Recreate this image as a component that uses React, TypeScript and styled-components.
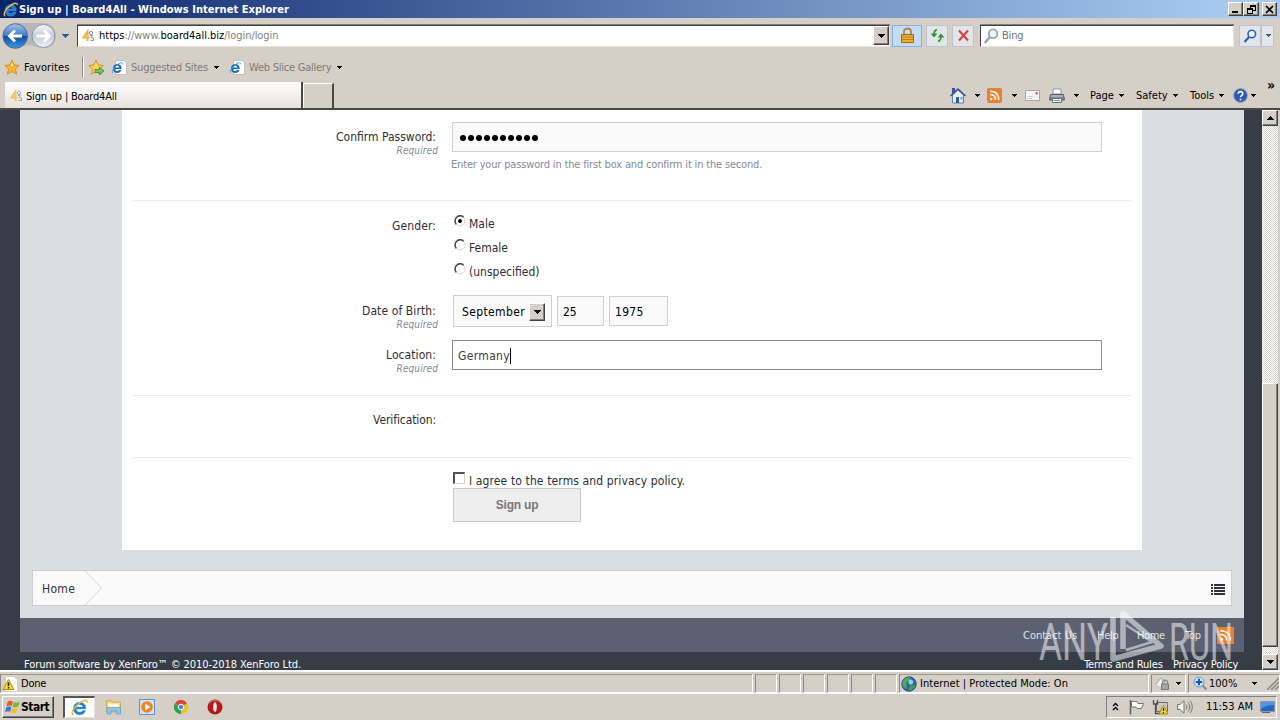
import React from 'react';
import styled, { createGlobalStyle } from 'styled-components';

type TextProps = {
    $width?: number;
    $spacing?: number;
    $color?: string;
};

const GlobalStyle = createGlobalStyle`
    * {
        box-sizing: border-box;
    }

    body {
        margin: 0;
        overflow: hidden;
        background: #d5cfc7;
        font-family: "DejaVu Sans Condensed", "DejaVu Sans", sans-serif;
        font-size: 11px;
        color: #000;
    }

    svg {
        display: block;
        flex: none;
    }
`;

const Window = styled.div`
    display: flex;
    flex-direction: column;
    width: 1280px;
    height: 720px;
    overflow: hidden;
`;

const Text = styled.span<TextProps>`
    flex: none;
    width: ${props => (props.$width ? `${props.$width}px` : 'auto')};
    letter-spacing: ${props => props.$spacing ?? 0}px;
    color: ${props => props.$color ?? 'inherit'};
    white-space: pre;
`;

const Gap = styled.span<{ $size: number }>`
    flex: none;
    width: ${props => props.$size}px;
`;

/* title bar */

const TitleBar = styled.header`
    display: flex;
    align-items: center;
    height: 18px;
    padding: 0 3px 0 3px;
    background: linear-gradient(90deg, #0a246a, #a6caf0 96%);
    color: #fff;
    font-weight: bold;
`;

const TitleText = styled.span`
    flex: 1;
    margin-left: 1px;
    letter-spacing: 0.05px;
    white-space: nowrap;
`;

const RaisedButton = styled.span<{ $width: number; $height: number }>`
    display: flex;
    flex: none;
    align-items: center;
    justify-content: center;
    width: ${props => props.$width}px;
    height: ${props => props.$height}px;
    background: #d5cfc7;
    border: 1px solid;
    border-color: #fff #404040 #404040 #fff;
    box-shadow: inset -1px -1px 0 #808080;
`;

/* navigation row */

const NavBar = styled.div`
    display: flex;
    align-items: center;
    height: 33px;
    padding: 2px 0 0 2px;
`;

const InsetBox = styled.div<{ $width: number }>`
    display: flex;
    flex: none;
    align-items: center;
    width: ${props => props.$width}px;
    height: 22px;
    background: #fff;
    border: 1px solid;
    border-color: #404040 #e8e4dc #e8e4dc #404040;
    box-shadow: 0 -1px 0 #808080;
`;

const NavButton = styled.span<{ $width: number; $active?: boolean }>`
    display: flex;
    flex: none;
    align-items: center;
    justify-content: center;
    width: ${props => props.$width}px;
    height: 22px;
    background: ${props => (props.$active ? '#c5dcf9' : '#e4e5e8')};
    border: 1px solid ${props => (props.$active ? '#8caede' : '#bcc4d2')};
`;

const Grow = styled.span`
    flex: 1;
`;

const FavoritesBar = styled.div`
    display: flex;
    align-items: center;
    height: 31px;
    padding: 1px 0 0 4px;
`;

const ToolSeparator = styled.span`
    width: 2px;
    height: 20px;
    margin: 0 4px 0 12px;
    background: linear-gradient(90deg, #8f8b83 50%, #fff 50%);
`;

/* tabs and command bar */

const TabRow = styled.div`
    display: flex;
    align-items: flex-end;
    height: 28px;
    padding-left: 5px;
    border-bottom: 2px solid #4a4845;
`;

const Tab = styled.div`
    display: flex;
    align-items: center;
    width: 298px;
    height: 26px;
    padding: 2px 0 0 5px;
    background: linear-gradient(#fff, #e6e2da);
    border-right: 2px solid #4a4845;
`;

const NewTab = styled.div`
    width: 31px;
    height: 25px;
    background: #d5cfc7;
    border: 1px solid #fff;
    border-right: 2px solid #4a4845;
    border-bottom: 0;
`;

const CommandBar = styled.div`
    display: flex;
    flex: 1;
    align-items: center;
    justify-content: flex-end;
    height: 26px;
    padding-top: 1px;
`;

const Overflow = styled.span`
    align-self: flex-start;
    width: 13px;
    margin: -6px 0 0 7px;
    font-size: 14px;
    font-weight: bold;
`;

/* web page */

const Viewport = styled.main`
    display: flex;
    height: 560px;
    background: #363d47;
    padding-left: 20px;
`;

const Page = styled.div`
    position: relative;
    display: flex;
    flex-direction: column;
    width: 1224px;
    margin-right: 18px;
    background: #dadee1;
`;

const Panel = styled.section`
    width: 1020px;
    height: 440px;
    margin-left: 102px;
    padding: 0 10px;
    background: #fff;
    font-size: 12px;
    color: #2e2f33;
`;

const FormSection = styled.div<{ $height: number; $top: number; $last?: boolean }>`
    height: ${props => props.$height}px;
    padding-top: ${props => props.$top}px;
    border-bottom: ${props => (props.$last ? '0' : '1px solid #ebebeb')};
`;

const FormRow = styled.div<{ $height?: number }>`
    display: flex;
    height: ${props => (props.$height ? `${props.$height}px` : 'auto')};
`;

const LabelCell = styled.div`
    display: flex;
    flex: none;
    flex-direction: column;
    align-items: flex-end;
    width: 320px;
    padding: 6px 16px 0 0;
    line-height: 18px;
`;

const Required = styled.em`
    margin-right: -2px;
    font-size: 10px;
    line-height: 9px;
    letter-spacing: 0.1px;
    color: #858a9b;
`;

const FieldCell = styled.div`
    display: flex;
    flex-direction: column;
    align-items: flex-start;
`;

const TextBox = styled.div<{ $width: number; $focus?: boolean }>`
    display: flex;
    align-items: center;
    width: ${props => props.$width}px;
    height: 30px;
    padding: 1px 0 0 5px;
    background: ${props => (props.$focus ? '#fff' : '#fafafa')};
    border: 1px solid ${props => (props.$focus ? '#8a8b8e' : '#cfcfcf')};
    color: ${props => (props.$focus ? '#3c3d42' : '#000')};
`;

const PasswordDot = styled.span`
    width: 6px;
    height: 6px;
    margin-right: 2px;
    border-radius: 50%;
    background: #000;
    &:first-child {
        margin-left: 2px;
    }
`;

const Caret = styled.span`
    width: 1px;
    height: 16px;
    background: #000;
`;

const Hint = styled.p`
    margin: 5px 0 0 -1px;
    font-size: 11px;
    line-height: 16px;
    letter-spacing: -0.17px;
    color: #8589a0;
`;

const RadioLine = styled.div`
    display: flex;
    align-items: center;
    height: 24px;
    padding-left: 2px;
    line-height: 16px;
`;

const RadioMark = styled.span`
    display: flex;
    width: 12px;
    height: 12px;
    margin: 0 3px 5px 0;
`;

const RadioText = styled(Text)`
    padding-top: 2px;
`;

const DateFields = styled.div`
    display: flex;
    gap: 5px;
    padding-left: 1px;
`;

const SelectBox = styled.div`
    display: flex;
    align-items: center;
    width: 99px;
    height: 32px;
    margin-top: -1px;
    padding: 1px 6px 0 8px;
    background: #fafafa;
    border: 1px solid #cfcfcf;
    color: #000;
`;

const AgreeLine = styled.div`
    display: flex;
    height: 17px;
    margin-left: 1px;
    line-height: 21px;
`;

const CheckBox = styled.span`
    width: 12px;
    height: 12px;
    margin: 1px 4px 0 0;
    border: 1px solid;
    border-width: 2px 1px 1px 2px;
    border-color: #55534f #d5cfc7 #d5cfc7 #55534f;
`;

const SubmitButton = styled.div`
    display: flex;
    align-items: center;
    justify-content: center;
    width: 128px;
    height: 34px;
    margin-left: 1px;
    background: #eee;
    border: 1px solid #c9c9c9;
    color: #777;
    font: bold 12px "Liberation Sans", Arial, sans-serif;
    letter-spacing: -0.2px;
`;

const Breadcrumb = styled.nav`
    display: flex;
    align-items: center;
    width: 1200px;
    height: 36px;
    margin: 20px 0 12px 12px;
    padding: 0 6px 0 9px;
    background: #fafafa;
    border: 1px solid #ccced1;
    font-size: 12px;
    line-height: 16px;
    color: #2e2f33;
`;

const CrumbText = styled(Text)`
    padding-top: 2px;
`;

const ListButton = styled.span`
    padding-top: 3px;
`;

const FooterLinks = styled.div`
    display: flex;
    align-items: center;
    justify-content: flex-end;
    height: 34px;
    padding-right: 10px;
    background: #5b6171;
    color: #dfe1e6;
`;

const Legal = styled.footer`
    display: flex;
    align-items: flex-start;
    height: 18px;
    padding: 4px 0 0 4px;
    line-height: 17px;
    background: #363d47;
    color: #fff;
`;

const Watermark = styled.svg`
    position: absolute;
    left: 1014px;
    top: 496px;
    width: 206px;
    height: 64px;
`;

const ScrollTrack = styled.div`
    display: flex;
    flex-direction: column;
    width: 16px;
    background: repeating-conic-gradient(#fff 0 25%, #d9d4cb 0 50%) 0 0 / 2px 2px;
`;

const ScrollThumb = styled.div`
    width: 16px;
    height: 264px;
    margin: 257px 0 7px;
    background: #d5cfc7;
    border: 1px solid;
    border-color: #fff #404040 #404040 #fff;
    box-shadow: inset -1px -1px 0 #808080;
`;

const ViewportEdge = styled.span`
    width: 2px;
    background: #d5cfc7;
`;

/* status bar and taskbar */

const StatusBar = styled.div`
    display: flex;
    align-items: center;
    height: 24px;
    padding-top: 2px;
    gap: 2px;
    border-top: 2px solid #fff;
    border-bottom: 1px solid #fff;
`;

const StatusPane = styled.div<{ $width: number }>`
    display: flex;
    flex: none;
    align-items: center;
    width: ${props => props.$width}px;
    height: 19px;
    padding-left: 1px;
    border: 1px solid;
    border-color: #9b968e #fff #fff #8b8780;
`;

const TaskBar = styled.div`
    display: flex;
    align-items: center;
    height: 26px;
    padding: 0 3px 1px 2px;
`;

const StartButton = styled.div`
    display: flex;
    align-items: center;
    width: 52px;
    height: 22px;
    padding-left: 2px;
    border: 1px solid;
    border-color: #fff #404040 #404040 #fff;
    box-shadow: inset -1px -1px 0 #808080;
    font-size: 12px;
    font-weight: bold;
`;

const ActiveTask = styled.div`
    display: flex;
    align-items: center;
    justify-content: center;
    width: 32px;
    height: 22px;
    margin: 0 10px 0 9px;
    background: #fff;
    border: 1px solid;
    border-width: 2px 1px 1px 2px;
    border-color: #555 #e8e4dc #e8e4dc #555;
`;

const Tray = styled.div`
    display: flex;
    align-items: center;
    width: 171px;
    height: 22px;
    padding-left: 5px;
    border: 1px solid;
    border-color: #808080 #fff #fff #808080;
    line-height: 16px;
`;

const Clock = styled(Text)`
    padding-top: 1px;
`;

const Arrow = ({ up = false, size = 7, color = '#000' }: { up?: boolean; size?: number; color?: string }) => (
    <svg width={size} height={size < 7 ? 3 : 4} viewBox="0 0 7 4" preserveAspectRatio="none" shapeRendering="crispEdges">
        <path d={up ? 'M0 4L3.5 0L7 4Z' : 'M0 0H7L3.5 4Z'} fill={color} />
    </svg>
);

const IeIcon = ({ size = 16 }: { size?: number }) => (
    <svg width={size} height={size} viewBox="0 0 16 16">
        <path d="M14 9.4H5C5.2 11.3 6.5 12.3 8.2 12.3C9.5 12.3 10.4 11.8 11 10.9H13.8C13 13.4 11 15 8.2 15C4.6 15 2.2 12.5 2.2 9C2.2 5.5 4.7 3 8.2 3C11.9 3 14.3 5.6 14 9.4ZM5.1 7.5H11.2C11 6.1 9.8 5.3 8.2 5.3C6.6 5.3 5.4 6.1 5.1 7.5Z" fill="#1d78cf" stroke="#65b8f1" strokeWidth=".5" />
        <path d="M2.4 15C-.8 13.6 2.9 7.2 8.5 3.4C12 .9 15.6.2 15.1 3.4" fill="none" stroke="#edb93b" strokeWidth="1.5" />
    </svg>
);

const IePageIcon = () => (
    <svg width="17" height="17" viewBox="0 0 17 17">
        <path d="M4.5 1.5H13L15.5 4V15.5H4.5Z" fill="#fff" stroke="#c0c0c0" />
        <path d="M10.6 9.9H4C4.3 11.6 5.4 12.1 6.6 12C7.4 12 8 11.5 8.3 11.1H10.4C9.8 13 8.4 14 6.5 14C3.8 14 1.9 12.1 1.9 9.5C1.9 6.9 3.9 5 6.5 5C9.3 5 10.9 7.2 10.6 9.9ZM4.1 8.4H8.4C8.2 7.4 7.5 6.8 6.4 6.8C5.2 6.8 4.4 7.4 4.1 8.4Z" fill="#1769bd" />
        <path d="M1.6 14.1C.4 12.5 3 7.7 7 5.1C9.5 3.5 12 3.1 12 5.3" fill="none" stroke="#3b9fd8" />
    </svg>
);

const SiteIcon = ({ faded = false }: { faded?: boolean }) => (
    <svg width="13" height="14" viewBox="0 0 13 14" opacity={faded ? 0.75 : 1}>
        <path d="M5.5 12V2.5L1.5 8.5H7.5" fill="none" stroke="#eeb440" strokeWidth="2" />
        <circle cx="9" cy="4" r="1.7" fill="none" stroke="#8594b4" />
        <path d="M7.8 6.5H10.5L9 8.5L11.5 9V11.5H8.5" fill="none" stroke="#8594b4" />
    </svg>
);

const StarIcon = ({ add = false }: { add?: boolean }) => (
    <svg width="17" height="17" viewBox="0 0 17 17">
        <path d="M8 1.2L10.1 6L15.3 6.5L11.4 10L12.6 15.2L8 12.5L3.4 15.2L4.6 10L.8 6.5L5.9 6Z" fill={add ? '#f8d251' : '#fbb42c'} stroke="#cf8a1b" strokeWidth=".9" />
        <path d="M8 3.5L9.3 7H6.3Z" fill="#ffe9a0" />
        {add && <path d="M7 10.5H11.5V8.3L16 12L11.5 15.8V13.5H7Z" fill="#6fcb58" stroke="#2d8a2b" strokeWidth=".8" />}
    </svg>
);

const NavCircles = () => (
    <svg width="55" height="28" viewBox="0 0 55 28">
        <defs>
            <linearGradient id="back" x1="0" y1="0" x2="0" y2="1">
                <stop offset="0" stopColor="#a6c6ec" />
                <stop offset=".48" stopColor="#3d7ac8" />
                <stop offset=".52" stopColor="#124b9f" />
                <stop offset="1" stopColor="#3d9be4" />
            </linearGradient>
            <linearGradient id="forward" x1="0" y1="0" x2="0" y2="1">
                <stop offset="0" stopColor="#f6f7fa" />
                <stop offset=".5" stopColor="#c3cbd8" />
                <stop offset="1" stopColor="#f0f3f8" />
            </linearGradient>
        </defs>
        <path d="M13 1H41C49 1 54 7 54 14C54 21 49 26 42 26C35 26 32 23 27 23C22 23 20 26 13 26Z" fill="#b6b6bd" />
        <circle cx="13.2" cy="14" r="12.3" fill="url(#back)" stroke="#4e6a96" />
        <circle cx="41.5" cy="14" r="11.5" fill="url(#forward)" stroke="#8b94a4" />
        <path d="M20 14H8M13 8.5L7.5 14L13 19.5" fill="none" stroke="#fff" strokeWidth="2.8" />
        <path d="M34.5 14H47M42 8.5L47.5 14L42 19.5" fill="none" stroke="#fff" strokeWidth="2.8" />
    </svg>
);

const LockIcon = () => (
    <svg width="15" height="17" viewBox="0 0 15 17">
        <path d="M4 8V4.5C4 .5 11 .5 11 4.5V8" fill="none" stroke="#a58a4a" strokeWidth="1.8" />
        <path d="M1.5 7.5H13.5V15.5H1.5Z" fill="#eeaf2e" stroke="#9b6c16" />
        <path d="M2 10H13M2 12.5H13" stroke="#c0841b" />
    </svg>
);

const RefreshIcon = () => (
    <svg width="15" height="15" viewBox="0 0 15 15" fill="none" stroke="#319436" strokeWidth="1.7">
        <path d="M7 1.8C4.5 1.8 4 3.5 4 7.5" />
        <path d="M8 13.2C10.5 13.2 11 11.5 11 7.5" />
        <path d="M.5 5.5H7.5L4 9.5ZM7.5 9.5H14.5L11 5.5Z" fill="#319436" stroke="none" />
    </svg>
);

const StopIcon = () => (
    <svg width="13" height="13" viewBox="0 0 13 13">
        <path d="M2 1.5L11 11.5M11 1.5L2 11.5" stroke="#cf4646" strokeWidth="2.1" />
    </svg>
);

const SearchIcon = ({ color = '#2c62b8', size = 14 }: { color?: string; size?: number }) => (
    <svg width={size} height={size} viewBox="0 0 14 14" fill="none" stroke={color}>
        <circle cx="8.8" cy="5" r="3.8" strokeWidth="1.6" fill="#eef5fc" />
        <path d="M6 8L1.5 13" strokeWidth="2.2" />
    </svg>
);

const HomeIcon = () => (
    <svg width="18" height="18" viewBox="0 0 18 18">
        <path d="M3.5 8V16H14.5V8L9 3Z" fill="#e5edf7" stroke="#667fa8" />
        <path d="M1.5 9L9 2L16.5 9" fill="none" stroke="#32558f" strokeWidth="1.5" />
        <path d="M3 1H6V5L3 7Z" fill="#4450a4" />
        <path d="M7 10H10V16H7Z" fill="#28609b" />
        <path d="M11.5 10H13.5V12.5H11.5Z" fill="#5ba8d4" />
    </svg>
);

const RssIcon = ({ size = 15, flat = false }: { size?: number; flat?: boolean }) => (
    <svg width={size} height={size} viewBox="0 0 15 15">
        <rect width="15" height="15" rx={flat ? 0 : 2} fill="#e9802f" />
        <circle cx="4.2" cy="11" r="1.3" fill="#fff" />
        <path d="M3 6.5C6.5 6.5 8.6 8.6 8.6 12M3 3.3C8.5 3.3 11.8 6.6 11.8 12" fill="none" stroke="#fff" strokeWidth="1.5" />
    </svg>
);

const MailIcon = () => (
    <svg width="15" height="11" viewBox="0 0 15 11">
        <path d="M.5.5H14.5V10.5H.5Z" fill="#f6f6f8" stroke="#a5a6b0" />
        <path d="M10.5 2H12.8V4.5H10.5Z" fill="#d16870" />
        <path d="M2.5 6.5H8M2.5 8.5H7" stroke="#d0d1d8" />
    </svg>
);

const PrinterIcon = () => (
    <svg width="18" height="16" viewBox="0 0 18 16">
        <path d="M5 1H13V6H5Z" fill="#fff" stroke="#9096a0" />
        <path d="M2.5 6.5H15.5L16.5 12H1.5Z" fill="#858b96" stroke="#555b66" />
        <path d="M3 8H15" stroke="#cdd2da" />
        <path d="M4.5 10.5H13.5V14.5H4.5Z" fill="#e4edf7" stroke="#6b7280" />
        <path d="M6 12.5H12" stroke="#69a4cf" />
    </svg>
);

const HelpIcon = () => (
    <svg width="15" height="15" viewBox="0 0 15 15">
        <circle cx="7.5" cy="7.5" r="6.9" fill="#2d57b1" stroke="#8ca2d4" />
        <path d="M5.2 5.8C5.2 2.8 10 2.9 9.8 5.7C9.7 7.4 7.5 7.2 7.5 9.3M7.5 10.8V12.3" fill="none" stroke="#fff" strokeWidth="1.6" />
    </svg>
);

const RadioDot = ({ checked = false }: { checked?: boolean }) => (
    <svg width="12" height="12" viewBox="0 0 12 12">
        <circle cx="6" cy="6" r="5" fill="#fff" stroke="#dcd8d0" />
        <path d="M2.3 9.5C.2 6.7 1 3 3.4 1.6C5.3.4 8 .6 9.6 2.3" fill="none" stroke="#4b4b4b" strokeWidth="1.5" />
        {checked && <circle cx="6" cy="6" r="2" fill="#000" />}
    </svg>
);

const CrumbArrow = () => (
    <svg width="18" height="34" viewBox="0 0 18 34">
        <path d="M0 0L16.5 17L0 34" fill="none" stroke="#d2d4d6" />
    </svg>
);

const ListIcon = () => (
    <svg width="14" height="11" viewBox="0 0 14 11" shapeRendering="crispEdges">
        <path d="M0 0H2V2H0ZM3 0H14V2H3ZM0 3H2V5H0ZM3 3H14V5H3ZM0 6H2V8H0ZM3 6H14V8H3ZM0 9H2V11H0ZM3 9H14V11H3Z" fill="#303136" />
    </svg>
);

const WarningPage = () => (
    <svg width="16" height="16" viewBox="0 0 16 16">
        <path d="M3.5.5H12L15.5 4V15.5H3.5Z" fill="#fff" stroke="#d5d2c8" />
        <path d="M6.5 3.5L12 13.5H1Z" fill="#f5d822" stroke="#b09414" />
        <path d="M6.5 6.5V10M6.5 11V12.4" stroke="#222" strokeWidth="1.5" />
    </svg>
);

const GlobeIcon = () => (
    <svg width="16" height="16" viewBox="0 0 16 16">
        <circle cx="8" cy="8" r="7.2" fill="#2565b4" stroke="#27497b" />
        <path d="M1.5 7C2 2.5 6 .8 9.5 1.5L8 5L5 7L6 10L4.5 13C2 11.5 1 9.5 1.5 7Z" fill="#4eac50" />
        <path d="M9 10L14.3 8.5C14 12.5 11 15 7 14.5Z" fill="#43a24a" />
        <path d="M8 4C11 2.5 13 5 12 7C11 9 8 9 7.5 7Z" fill="#8fd0f0" />
    </svg>
);

const PrivacyIcon = () => (
    <svg width="16" height="15" viewBox="0 0 16 15">
        <path d="M1 8L6 2L10 5L6 11" fill="#f2f2f2" stroke="#a0a0a0" />
        <path d="M7.5 8V6C7.5 3.5 12.5 3.5 12.5 6V8" fill="none" stroke="#85878b" strokeWidth="1.3" />
        <path d="M6.5 8H13.5V13.5H6.5Z" fill="#a4a6aa" stroke="#74767a" />
    </svg>
);

const ZoomIcon = () => (
    <svg width="15" height="15" viewBox="0 0 15 15">
        <path d="M9 9L13.5 13.5" stroke="#8a8fa0" strokeWidth="2.4" />
        <circle cx="6" cy="6" r="5" fill="#cde4f8" stroke="#6c98ca" />
        <path d="M6 2.8V9.2M2.8 6H9.2" stroke="#1957b2" strokeWidth="2" />
    </svg>
);

const GripIcon = () => (
    <svg width="12" height="13" viewBox="0 0 12 13">
        <path d="M0 13L12 1M4 13L12 5M8 13L12 9" stroke="#8a867e" strokeWidth="1.5" />
    </svg>
);

const WindowsFlag = () => (
    <svg width="16" height="16" viewBox="0 0 16 16">
        <path d="M2.5 3C4.5 1.5 6 1.6 7.8 2.5L6.6 7.1C5 6.2 3.4 6.3 1.5 7.5Z" fill="#e5592c" />
        <path d="M8.7 3C10.5 4 12.5 4 14.8 2.6L13.4 7.3C11.5 8.6 9.5 8.5 7.5 7.5Z" fill="#78b83a" />
        <path d="M1.2 8.5C3 7.3 4.8 7.3 6.4 8.2L5.1 12.8C3.5 12 1.8 12 0 13.2Z" fill="#3979d0" />
        <path d="M7.2 8.6C9.2 9.6 11.2 9.5 13.1 8.4L11.8 13.1C9.8 14.5 7.8 14.3 5.9 13.2Z" fill="#f3bd2d" />
    </svg>
);

const FolderIcon = () => (
    <svg width="17" height="16" viewBox="0 0 17 16">
        <path d="M1.5 1.5H6L7 3H15.5V13H1.5Z" fill="#ecd27a" stroke="#d0b05a" />
        <path d="M3 4.5H14V9H3Z" fill="#fdf6cf" />
        <path d="M2 8.5H15.5V15H11.5V12H6V15H2Z" fill="#8cc3e8" stroke="#5b9bc8" strokeWidth=".7" />
    </svg>
);

const PlayerIcon = () => (
    <svg width="16" height="16" viewBox="0 0 16 16">
        <path d="M.5.5H15.5V15.5H.5Z" fill="#cfe3f5" stroke="#5d93cd" />
        <circle cx="8" cy="8" r="5.8" fill="#ee8420" />
        <path d="M6.3 4.6L11.3 8L6.3 11.4Z" fill="#fff" />
    </svg>
);

const ChromeIcon = () => (
    <svg width="14" height="14" viewBox="0 0 14 14">
        <path d="M7 7L.9 3.5A7 7 0 0 1 13.1 3.5Z" fill="#db4437" />
        <path d="M7 7L13.1 3.5A7 7 0 0 1 7 14Z" fill="#f4c20d" />
        <path d="M7 7L7 14A7 7 0 0 1 .9 3.5Z" fill="#2f9e58" />
        <circle cx="7" cy="7" r="2.8" fill="#4285f4" stroke="#fff" />
    </svg>
);

const OperaIcon = () => (
    <svg width="16" height="16" viewBox="0 0 16 16">
        <circle cx="8" cy="8" r="7.5" fill="#b3191c" />
        <path d="M2 4.5C4 .5 12 .5 14 4.5" fill="none" stroke="#e07070" />
        <ellipse cx="8" cy="8" rx="1.8" ry="4.7" fill="#f6eaea" />
    </svg>
);

const FlagIcon = () => (
    <svg width="17" height="16" viewBox="0 0 17 16">
        <path d="M2.5 1V15.5" stroke="#666" strokeWidth="1.6" />
        <path d="M3.5 2.5H9L10 4.5H15.5L13.5 9.5H9L8 8H3.5Z" fill="#fff" stroke="#777" />
    </svg>
);

const NetworkIcon = () => (
    <svg width="17" height="16" viewBox="0 0 17 16">
        <path d="M4.5 3.5H15.5V12.5H4.5Z" fill="#c9c9c9" stroke="#6c6c6c" />
        <path d="M1.5 1V5H5.5V1M3.5 5V14.5H8" fill="none" stroke="#4e4e4e" strokeWidth="1.3" />
        <path d="M11.5 6L16 15H7Z" fill="#f3d21d" stroke="#a98d12" />
        <path d="M11.5 9V12M11.5 13V14.2" stroke="#222" strokeWidth="1.2" />
    </svg>
);

const SpeakerIcon = () => (
    <svg width="17" height="16" viewBox="0 0 17 16" fill="none" stroke="#747474">
        <path d="M1.5 5.5H4L8 1.8V14.2L4 10.5H1.5Z" fill="#f6f6f6" />
        <path d="M10 5.5C11.3 7 11.3 9 10 10.5M12 3.5C14.3 6 14.3 10 12 12.5M14 2C17 5 17 11 14 14" />
    </svg>
);

const MonitorIcon = () => (
    <svg width="15" height="14" viewBox="0 0 15 14">
        <path d="M.5 1.5H14.5V11.5H.5Z" fill="#2466c4" stroke="#8a97aa" />
        <path d="M1 2H14V5C9 5 5 6 1 9Z" fill="#5594e2" />
        <path d="M2 12.5H10" stroke="#5b6470" />
    </svg>
);

const BrandMark = () => (
    <Watermark viewBox="1034 606 206 64" fill="#fff" opacity=".52" fontFamily="Roboto, sans-serif" fontWeight="400">
        <text x="1039" y="659.5" fontSize="51" textLength="69" lengthAdjust="spacingAndGlyphs">ANY</text>
        <text x="1169" y="659.5" fontSize="51" textLength="64" lengthAdjust="spacingAndGlyphs">RUN</text>
        <path d="M1123 649V613.5L1161 646L1113 659V617" fill="none" stroke="#fff" strokeWidth="5.5" strokeLinejoin="round" />
        <path d="M1126 625L1152 642L1126 650" fill="none" stroke="#fff" strokeWidth="2.5" />
    </Watermark>
);

const Label = ({ text, spacing = 0, required = false }: { text: string; spacing?: number; required?: boolean }) => (
    <LabelCell>
        <Text $spacing={spacing}>{text}</Text>
        {required && <Required>Required</Required>}
    </LabelCell>
);

const Radio = ({ text, checked }: { text: string; checked?: boolean }) => (
    <RadioLine>
        <RadioMark><RadioDot checked={checked} /></RadioMark>
        <RadioText>{text}</RadioText>
    </RadioLine>
);

const SignUpForm = () => (
    <Panel>
        <FormSection $height={91} $top={12}>
            <FormRow>
                <Label text="Confirm Password:" required />
                <FieldCell>
                    <TextBox $width={650}>
                        {Array.from({ length: 10 }, (_, i) => <PasswordDot key={i} />)}
                    </TextBox>
                    <Hint>Enter your password in the first box and confirm it in the second.</Hint>
                </FieldCell>
            </FormRow>
        </FormSection>
        <FormSection $height={195} $top={10}>
            <FormRow $height={85}>
                <Label text="Gender:" spacing={0.1} />
                <FieldCell>
                    <Radio text="Male" checked />
                    <Radio text="Female" />
                    <Radio text="(unspecified)" />
                </FieldCell>
            </FormRow>
            <FormRow $height={44}>
                <Label text="Date of Birth:" spacing={0.1} required />
                <DateFields>
                    <SelectBox>
                        <Text $spacing={0.37}>September</Text>
                        <Grow />
                        <RaisedButton $width={16} $height={18}><Arrow /></RaisedButton>
                    </SelectBox>
                    <TextBox $width={47}>25</TextBox>
                    <TextBox $width={59}><Text $spacing={0.3}>1975</Text></TextBox>
                </DateFields>
            </FormRow>
            <FormRow>
                <Label text="Location:" spacing={0.08} required />
                <TextBox $width={650} $focus>
                    <Text $spacing={0.35}>Germany</Text>
                    <Caret />
                </TextBox>
            </FormRow>
        </FormSection>
        <FormSection $height={62} $top={9}>
            <FormRow>
                <Label text="Verification:" spacing={-0.1} />
            </FormRow>
        </FormSection>
        <FormSection $height={92} $top={13} $last>
            <FormRow>
                <LabelCell />
                <FieldCell>
                    <AgreeLine>
                        <CheckBox />
                        <Text $spacing={0.12}>I agree to the terms and privacy policy.</Text>
                    </AgreeLine>
                    <SubmitButton>Sign up</SubmitButton>
                </FieldCell>
            </FormRow>
        </FormSection>
    </Panel>
);

const App: React.FC = () => {
    return (
        <Window>
            <GlobalStyle />
            <TitleBar>
                <IeIcon size={15} />
                <TitleText>Sign up | Board4All - Windows Internet Explorer</TitleText>
                <RaisedButton $width={15} $height={14}>
                    <svg width="9" height="8"><path d="M1 7H7" stroke="#000" strokeWidth="2" /></svg>
                </RaisedButton>
                <RaisedButton $width={16} $height={14}>
                    <svg width="9" height="9" shapeRendering="crispEdges">
                        <path d="M3 1H9M3.5 1V3M8.5 1V6M6 5.5H9M0 4H6M.5 4V9M5.5 4V9M0 8.5H6" fill="none" stroke="#000" strokeWidth="1.2" />
                    </svg>
                </RaisedButton>
                <Gap $size={3} />
                <RaisedButton $width={15} $height={14}>
                    <svg width="9" height="9"><path d="M1 1L8 8M8 1L1 8" stroke="#000" strokeWidth="1.7" /></svg>
                </RaisedButton>
            </TitleBar>

            <NavBar>
                <NavCircles />
                <Gap $size={4} />
                <Arrow size={9} color="#2b5f96" />
                <Gap $size={7} />
                <InsetBox $width={813}>
                    <Gap $size={4} />
                    <SiteIcon />
                    <Gap $size={4} />
                    <Text $spacing={-0.06} $color="#808080">
                        <Text $color="#000">https</Text>://www.<Text $color="#000">board4all.biz</Text>/login/login
                    </Text>
                    <Grow />
                    <RaisedButton $width={16} $height={19}><Arrow /></RaisedButton>
                </InsetBox>
                <Gap $size={2} />
                <NavButton $width={30} $active><LockIcon /></NavButton>
                <Gap $size={4} />
                <NavButton $width={22}><RefreshIcon /></NavButton>
                <Gap $size={4} />
                <NavButton $width={22}><StopIcon /></NavButton>
                <Gap $size={6} />
                <InsetBox $width={254}>
                    <Gap $size={2} />
                    <SearchIcon color="#98a3b4" size={16} />
                    <Gap $size={3} />
                    <Text $spacing={-0.2} $color="#707070">Bing</Text>
                </InsetBox>
                <Gap $size={5} />
                <NavButton $width={22}><SearchIcon /></NavButton>
                <NavButton $width={13}><Arrow size={6} color="#2b5f96" /></NavButton>
            </NavBar>

            <FavoritesBar>
                <StarIcon />
                <Gap $size={3} />
                <Text $width={46} $spacing={0.1}>Favorites</Text>
                <ToolSeparator />
                <StarIcon add />
                <Gap $size={6} />
                <IePageIcon />
                <Gap $size={3} />
                <Text $width={79} $spacing={-0.2} $color="#7b7b7b">Suggested Sites</Text>
                <Gap $size={3} />
                <Arrow size={6} />
                <Gap $size={10} />
                <IePageIcon />
                <Gap $size={3} />
                <Text $width={84} $spacing={-0.24} $color="#7b7b7b">Web Slice Gallery</Text>
                <Gap $size={3} />
                <Arrow size={6} />
            </FavoritesBar>

            <TabRow>
                <Tab>
                    <SiteIcon faded />
                    <Gap $size={3} />
                    <Text $spacing={-0.19}>Sign up | Board4All</Text>
                </Tab>
                <NewTab />
                <CommandBar>
                    <HomeIcon />
                    <Gap $size={7} />
                    <Arrow size={6} />
                    <Gap $size={7} />
                    <RssIcon />
                    <Gap $size={9} />
                    <Arrow size={6} />
                    <Gap $size={8} />
                    <MailIcon />
                    <Gap $size={8} />
                    <PrinterIcon />
                    <Gap $size={7} />
                    <Arrow size={6} />
                    <Gap $size={11} />
                    <Text $width={24}>Page</Text>
                    <Gap $size={4} />
                    <Arrow size={6} />
                    <Gap $size={12} />
                    <Text $width={32}>Safety</Text>
                    <Gap $size={4} />
                    <Arrow size={6} />
                    <Gap $size={12} />
                    <Text $width={24}>Tools</Text>
                    <Gap $size={4} />
                    <Arrow size={6} />
                    <Gap $size={9} />
                    <HelpIcon />
                    <Gap $size={2} />
                    <Arrow size={6} />
                    <Gap $size={4} />
                    <Overflow>»</Overflow>
                </CommandBar>
            </TabRow>

            <Viewport>
                <Page>
                    <SignUpForm />
                    <Breadcrumb>
                        <CrumbText $width={43} $spacing={0.3}>Home</CrumbText>
                        <CrumbArrow />
                        <Grow />
                        <ListButton><ListIcon /></ListButton>
                    </Breadcrumb>
                    <FooterLinks>
                        <Text $width={54}>Contact Us</Text>
                        <Gap $size={20} />
                        <Text $width={21} $spacing={-0.3}>Help</Text>
                        <Gap $size={19} />
                        <Text $width={28} $spacing={-0.4}>Home</Text>
                        <Gap $size={20} />
                        <Text $width={18} $spacing={-0.2}>Top</Text>
                        <Gap $size={14} />
                        <RssIcon size={17} flat />
                    </FooterLinks>
                    <Legal>
                        <Text $spacing={-0.06}>Forum software by XenForo™ © 2010-2018 XenForo Ltd.</Text>
                        <Grow />
                        <Text $width={79} $spacing={-0.12}>Terms and Rules</Text>
                        <Gap $size={10} />
                        <Text $width={71} $spacing={-0.15}>Privacy Policy</Text>
                    </Legal>
                    <BrandMark />
                </Page>
                <ScrollTrack>
                    <RaisedButton $width={16} $height={16}><Arrow up /></RaisedButton>
                    <ScrollThumb />
                    <RaisedButton $width={16} $height={16}><Arrow /></RaisedButton>
                </ScrollTrack>
                <ViewportEdge />
            </Viewport>

            <StatusBar>
                <StatusPane $width={753}>
                    <WarningPage />
                    <Gap $size={3} />
                    <Text $spacing={-0.2}>Done</Text>
                </StatusPane>
                {Array.from({ length: 6 }, (_, i) => <StatusPane key={i} $width={22} />)}
                <StatusPane $width={250}>
                    <GlobeIcon />
                    <Gap $size={3} />
                    <Text $spacing={0.04}>Internet | Protected Mode: On</Text>
                </StatusPane>
                <StatusPane $width={35}>
                    <Gap $size={2} />
                    <PrivacyIcon />
                    <Gap $size={4} />
                    <Arrow size={6} />
                </StatusPane>
                <StatusPane $width={92}>
                    <Gap $size={3} />
                    <ZoomIcon />
                    <Gap $size={1} />
                    <Text>100%</Text>
                    <Gap $size={14} />
                    <Arrow size={6} />
                    <Gap $size={10} />
                    <GripIcon />
                </StatusPane>
            </StatusBar>

            <TaskBar>
                <StartButton>
                    <WindowsFlag />
                    <Text $spacing={-0.5}>Start</Text>
                </StartButton>
                <ActiveTask><IeIcon size={17} /></ActiveTask>
                <FolderIcon />
                <Gap $size={17} />
                <PlayerIcon />
                <Gap $size={19} />
                <ChromeIcon />
                <Gap $size={19} />
                <OperaIcon />
                <Grow />
                <Tray>
                    <svg width="7" height="9" viewBox="0 0 7 9"><path d="M1 4L3.5 1.5L6 4M1 8L3.5 5.5L6 8" fill="none" stroke="#000" strokeWidth="1.4" /></svg>
                    <Gap $size={9} />
                    <FlagIcon />
                    <Gap $size={7} />
                    <NetworkIcon />
                    <Gap $size={7} />
                    <SpeakerIcon />
                    <Gap $size={13} />
                    <Clock>11:53 AM</Clock>
                    <Gap $size={7} />
                    <MonitorIcon />
                </Tray>
            </TaskBar>
        </Window>
    );
};

export default App;
